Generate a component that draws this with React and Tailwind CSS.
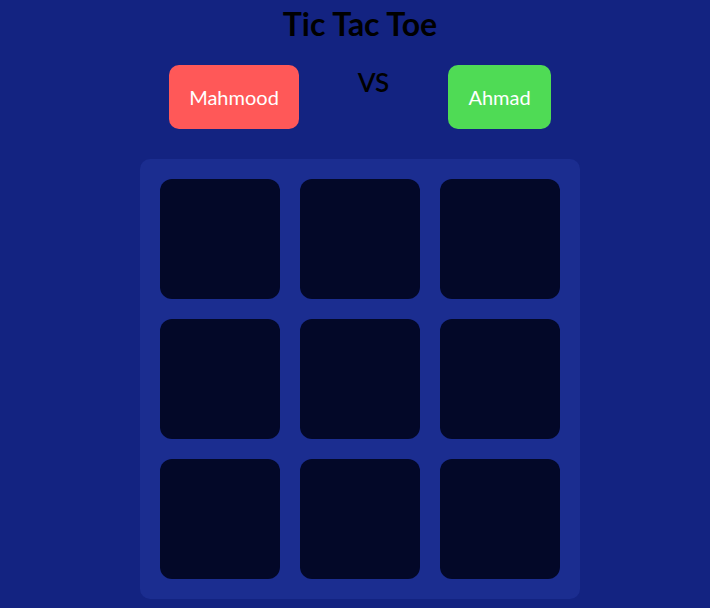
export default function App() {
  const cells = Array.from({ length: 9 });
  return (
    <div className="min-h-[608px] w-full bg-[#132381] flex flex-col items-center pl-[10px]" style={{ fontFamily: "Lato, 'Noto Sans', sans-serif" }}>
      <h1 className="text-[32px] leading-[48px] font-bold text-black mt-0">Tic Tac Toe</h1>
      <div className="flex items-start mt-[17px]">
        <div className="w-[130px] h-[64px] rounded-[10px] bg-[#ff5858] text-white text-[20px] flex items-center justify-center">Mahmood</div>
        <div className="mx-[60px] w-[29px] flex justify-center text-[26px] font-semibold text-black leading-none mt-[4px]">VS</div>
        <div className="w-[103px] h-[64px] rounded-[10px] bg-[#4fdb55] text-white text-[20px] flex items-center justify-center">Ahmad</div>
      </div>
      <div className="mt-[30px] w-[440px] h-[440px] p-[20px] rounded-[10px] bg-[#1b2d90] grid grid-cols-3 gap-[20px]">
        {cells.map((_, i) => (
          <div key={i} className="w-[120px] h-[120px] rounded-[12px] bg-[#030828]" />
        ))}
      </div>
    </div>
  );
}
